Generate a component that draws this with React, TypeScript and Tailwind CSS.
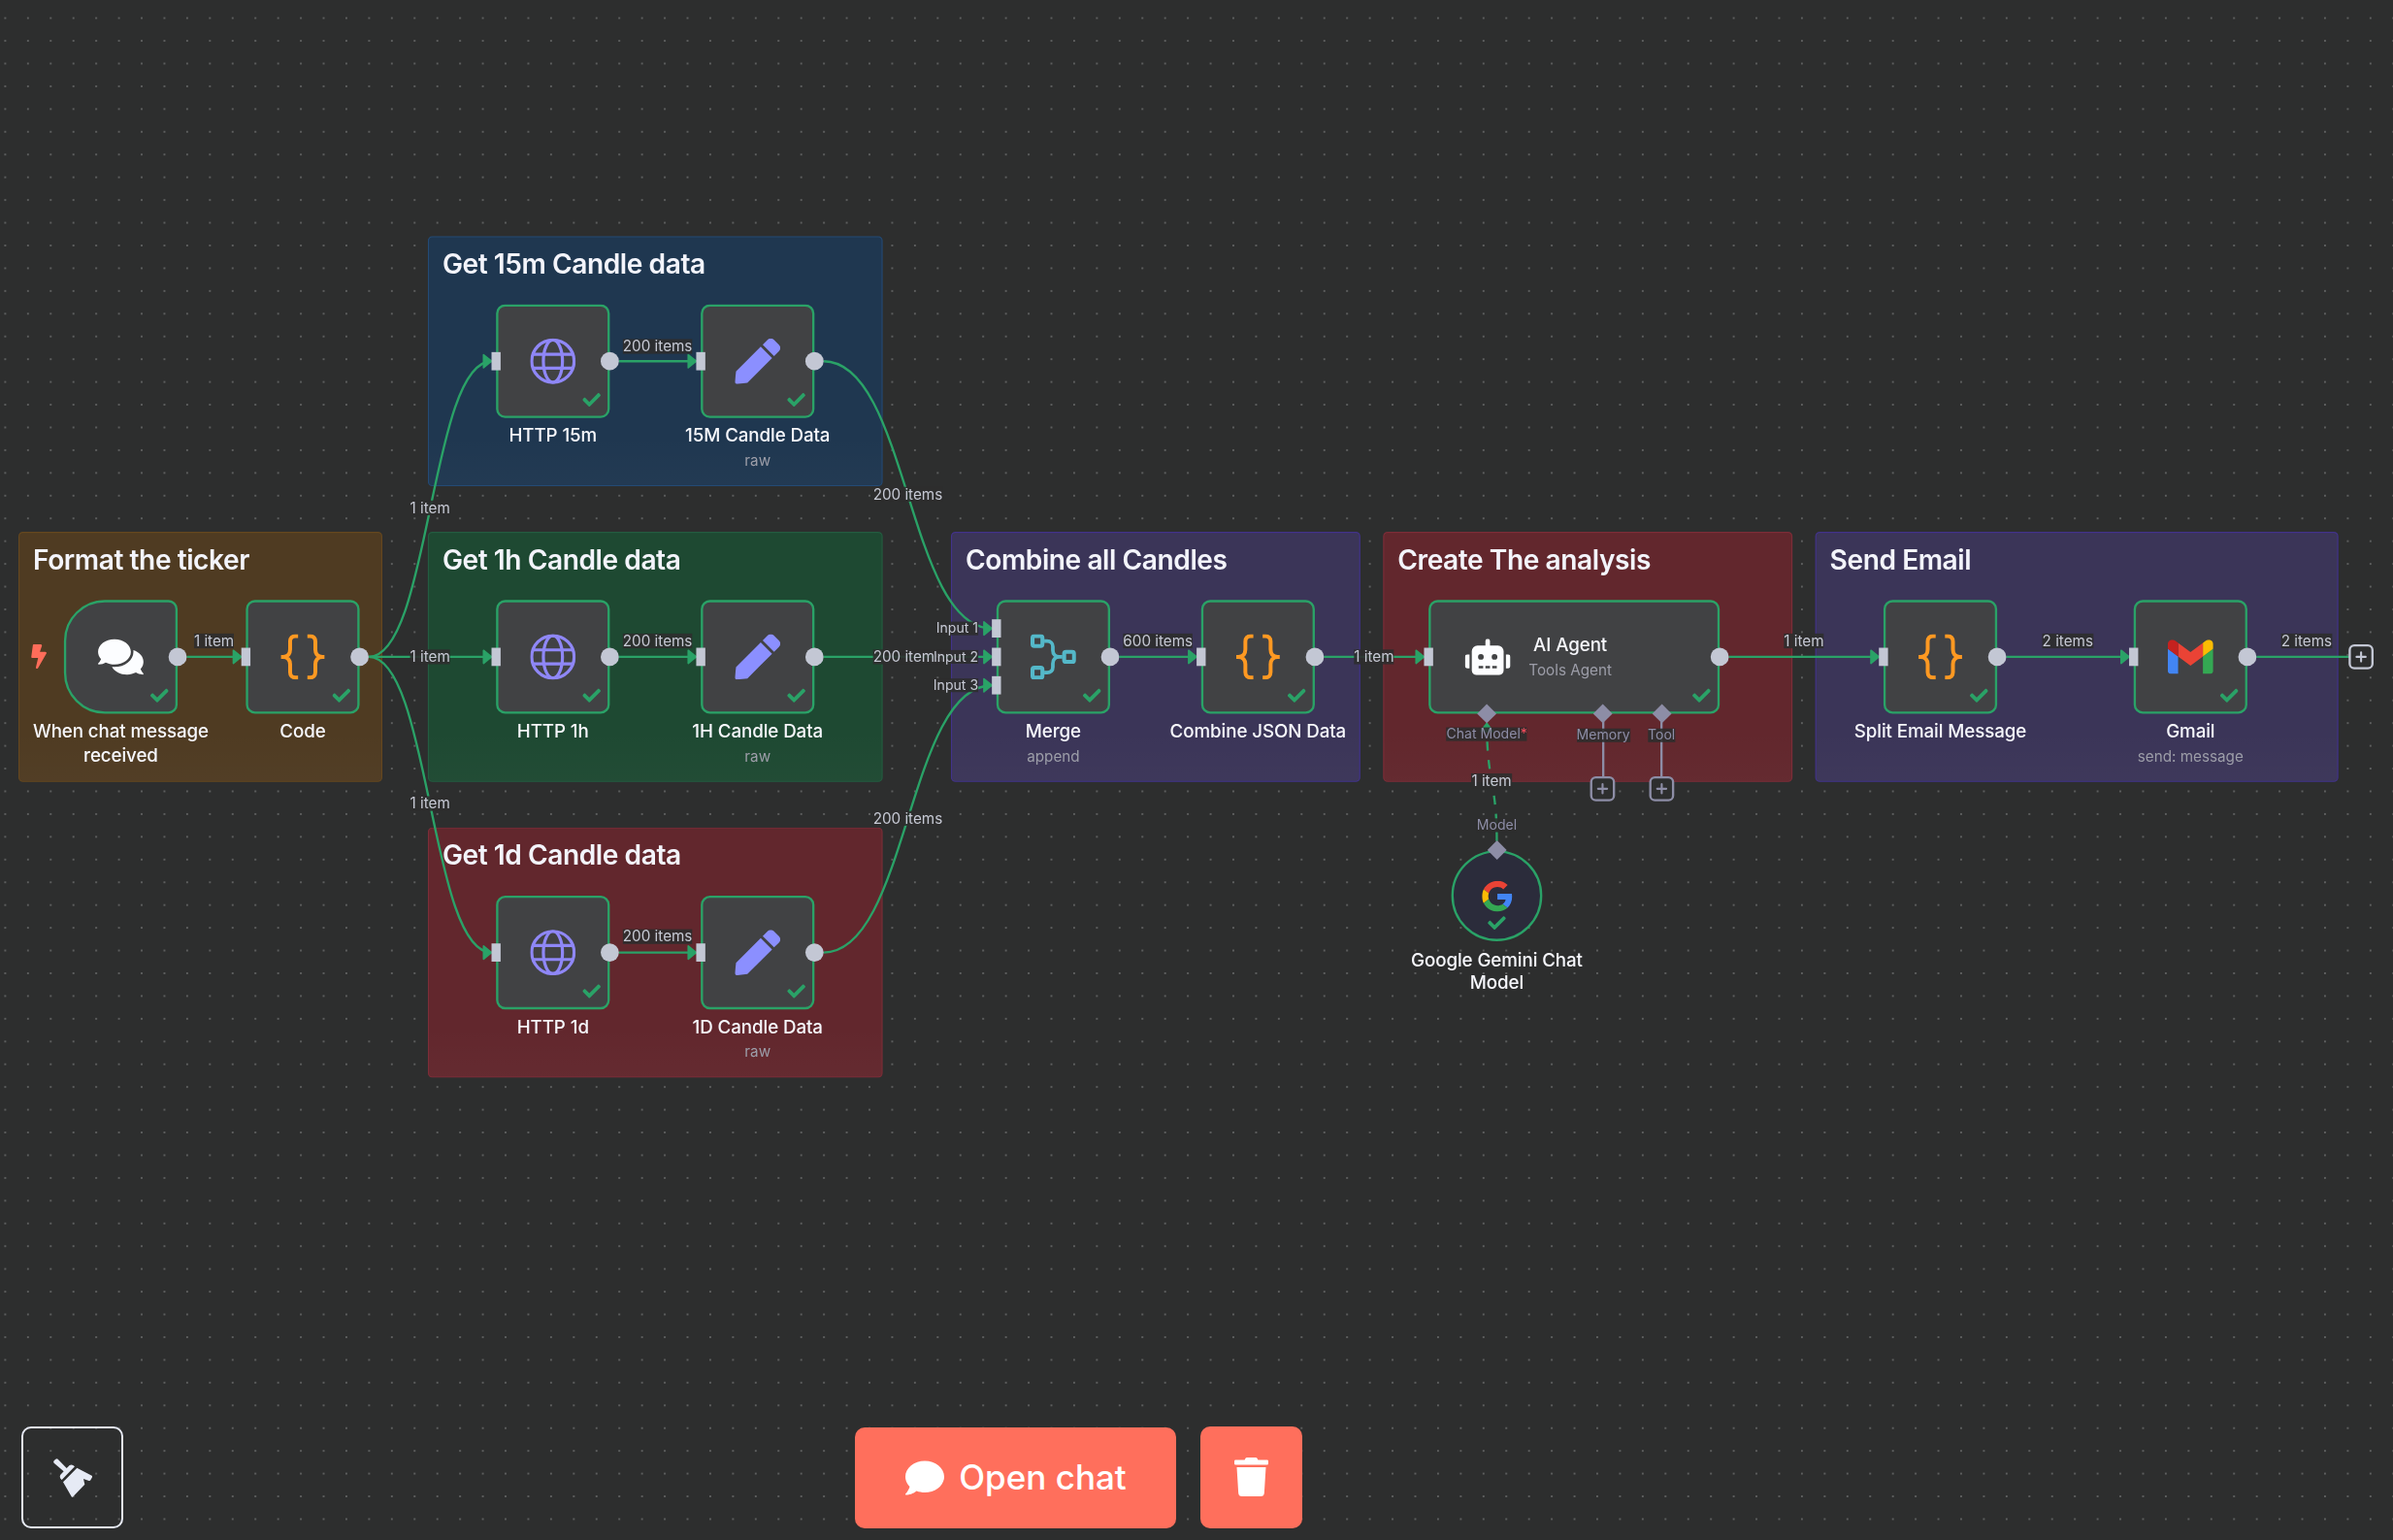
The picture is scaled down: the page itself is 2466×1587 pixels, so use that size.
import type { ReactNode } from "react";
import { FaBolt, FaCheck, FaComment, FaComments, FaPen, FaRobot, FaTrash } from "react-icons/fa";

const GREEN = "#2aa267";
const PORT = "#c3c7d4";
const AUX = "#8d8da6";

/* ---------- icons ---------- */

function BracesIcon() {
  return (
    <svg viewBox="0 0 40 40" className="size-10" fill="none" stroke="#ff9922" strokeWidth="3.4" strokeLinejoin="round">
      <path d="M15.9 1.7h-2.4c-2.8 0-4.6 1.9-4.6 4.7v7.1c0 3.9-2 6.5-6.2 6.5H.9M2.6 20c4.2 0 6.3 2.6 6.3 6.5v7.1c0 2.8 1.8 4.7 4.6 4.7h2.4" />
      <path d="M24.1 1.7h2.4c2.8 0 4.6 1.9 4.6 4.7v7.1c0 3.9 2 6.5 6.2 6.5h1.8M37.4 20c-4.2 0-6.3 2.6-6.3 6.5v7.1c0 2.8-1.8 4.7-4.6 4.7h-2.4" />
    </svg>
  );
}

function GlobeIcon() {
  return (
    <svg viewBox="0 0 40 40" className="size-10" fill="none" stroke="#8f87f7" strokeWidth="2.75">
      <circle cx="20" cy="20" r="18.65" />
      <ellipse cx="20" cy="20" rx="8.4" ry="18.65" />
      <path d="M2.5 13.9h35M2.5 26.1h35" />
    </svg>
  );
}

function MergeIcon() {
  return (
    <svg viewBox="0 0 40 40" className="size-10" fill="none" stroke="#54b8c9" strokeWidth="3.5">
      <rect x="1.75" y="1.75" width="8.7" height="8.7" rx="1.6" />
      <rect x="1.75" y="29.55" width="8.7" height="8.7" rx="1.6" />
      <rect x="29.55" y="15.65" width="8.7" height="8.7" rx="1.6" />
      <path strokeWidth="3.2" d="M12 6.2h2.6c3 0 5 1.9 5 4.8v3c0 3.6 2.2 6 5.8 6H28M12 33.8h2.6c3 0 5-1.9 5-4.8v-3c0-3.6 2.2-6 5.8-6" />
    </svg>
  );
}

function GmailIcon() {
  return (
    <svg viewBox="52 42 88 66" className="h-[30px] w-10">
      <path fill="#4285f4" d="M58 108h14V74L52 59v43c0 3.32 2.69 6 6 6" />
      <path fill="#34a853" d="M120 108h14c3.32 0 6-2.69 6-6V59l-20 15" />
      <path fill="#fbbc04" d="M120 48v26l20-15v-8c0-7.42-8.47-11.65-14.4-7.2" />
      <path fill="#ea4335" d="M72 74V48l24 18 24-18v26L96 92" />
      <path fill="#c5221f" d="M52 51v8l20 15V48l-5.6-4.2c-5.94-4.45-14.4-.22-14.4 7.2" />
    </svg>
  );
}

function GoogleIcon() {
  return (
    <svg viewBox="0 0 48 48" className="size-[27px]">
      <path fill="#ea4335" d="M24 9.5c3.54 0 6.71 1.22 9.21 3.6l6.85-6.85C35.9 2.38 30.47 0 24 0 14.62 0 6.51 5.38 2.56 13.22l7.98 6.19C12.43 13.72 17.74 9.5 24 9.5z" />
      <path fill="#4285f4" d="M46.98 24.55c0-1.57-.15-3.09-.38-4.55H24v9.02h12.94c-.58 2.96-2.26 5.48-4.78 7.18l7.73 6c4.51-4.18 7.09-10.36 7.09-17.65z" />
      <path fill="#fbbc05" d="M10.53 28.59c-.48-1.45-.76-2.99-.76-4.59s.27-3.14.76-4.59l-7.98-6.19C.92 16.46 0 20.12 0 24c0 3.88.92 7.54 2.56 10.78l7.97-6.19z" />
      <path fill="#34a853" d="M24 48c6.48 0 11.93-2.13 15.89-5.81l-7.73-6c-2.15 1.45-4.92 2.3-8.16 2.3-6.26 0-11.57-4.22-13.47-9.91l-7.98 6.19C6.51 42.62 14.62 48 24 48z" />
    </svg>
  );
}

function BroomIcon() {
  return (
    <svg viewBox="0 0 120 120" className="size-10" fill="#e6eaf5">
      <path d="M2 7 7 2q4-3 7 0l27 28 9-9q8-5 16 4L26 66q-9-7-4-16l10-10L2 14q-3-3 0-7z" />
      <path d="M73 29l46 24q3 2 1 5l-5 9q-2 3-5 2l-17-6 4 17-36 38q-3 3-5 0L30 73z" />
    </svg>
  );
}

/* ---------- canvas pieces ---------- */

const GROUPS: { x: number; y: number; w: number; title: string; tone: string }[] = [
  { x: 0, y: 0, w: 320, title: "Format the ticker", tone: "bg-[#4f3b22] border-[#65471f]" },
  { x: 360, y: -260, w: 400, title: "Get 15m Candle data", tone: "bg-[#1f3750] border-[#244a75]" },
  { x: 360, y: 0, w: 400, title: "Get 1h Candle data", tone: "bg-[#1e4932] border-[#245c41]" },
  { x: 360, y: 260, w: 400, title: "Get 1d Candle data", tone: "bg-[#62272d] border-[#7c2d38]" },
  { x: 820, y: 0, w: 360, title: "Combine all Candles", tone: "bg-[#3b3558] border-[#42338a]" },
  { x: 1200, y: 0, w: 360, title: "Create The analysis", tone: "bg-[#62272d] border-[#7c2d38]" },
  { x: 1580, y: 0, w: 460, title: "Send Email", tone: "bg-[#3b3558] border-[#42338a]" },
];

function Group({ x, y, w, title, tone }: (typeof GROUPS)[number]) {
  return (
    <div
      className={`absolute h-[220px] rounded-[4px] border bg-linear-to-b from-transparent from-80% to-white/[0.018] px-[11.8px] pt-[9.3px] ${tone}`}
      style={{ left: x, top: y, width: w }}
    >
      <h2 className="text-2xl leading-[30px] font-semibold tracking-[-0.38px] whitespace-nowrap text-[#f3f4fb]">{title}</h2>
    </div>
  );
}

function Check({ className }: { className: string }) {
  return <FaCheck className={`absolute size-4 text-[#2aa267] ${className}`} />;
}

function InPort({ y = 50 }: { y?: number }) {
  return <span className="absolute -left-1 h-4 w-2 bg-[#c3c7d4]" style={{ top: y - 8 }} />;
}

function OutPort() {
  return <span className="absolute top-[42px] -right-2 size-4 rounded-full bg-[#c3c7d4]" />;
}

type NodeProps = {
  x: number;
  y: number;
  label: string;
  sub?: string;
  icon: ReactNode;
  trigger?: boolean;
  inputs?: number[];
};

function Node({ x, y, label, sub, icon, trigger, inputs = [50] }: NodeProps) {
  return (
    <div className="absolute flex w-[100px] flex-col items-center" style={{ left: x, top: y }}>
      <div className="relative size-[100px]">
        <div
          className={`flex size-[100px] items-center justify-center border-2 border-[#2aa267] bg-[#414244] ${
            trigger ? "rounded-l-[36px] rounded-r-[8px]" : "rounded-[8px]"
          }`}
        >
          {icon}
        </div>
        {!trigger && inputs.map((p) => <InPort key={p} y={p} />)}
        <OutPort />
        <Check className="right-2 bottom-2" />
      </div>
      <div className="mt-[5.4px] w-[172px] text-center text-base leading-[20.3px] font-medium tracking-[-0.08px] text-[#f6f7fc]">{label}</div>
      {sub && <div className="mt-[3.8px] text-[13px] leading-4 whitespace-nowrap text-[#9c9da8]">{sub}</div>}
    </div>
  );
}

const NODES: NodeProps[] = [
  { x: 40, y: 60, label: "When chat message received", trigger: true, icon: <FaComments className="h-9 w-10 text-[#fcfdff]" /> },
  { x: 200, y: 60, label: "Code", icon: <BracesIcon /> },
  { x: 420, y: -200, label: "HTTP 15m", icon: <GlobeIcon /> },
  { x: 600, y: -200, label: "15M Candle Data", sub: "raw", icon: <FaPen className="size-10 text-[#8b8fff]" /> },
  { x: 420, y: 60, label: "HTTP 1h", icon: <GlobeIcon /> },
  { x: 600, y: 60, label: "1H Candle Data", sub: "raw", icon: <FaPen className="size-10 text-[#8b8fff]" /> },
  { x: 420, y: 320, label: "HTTP 1d", icon: <GlobeIcon /> },
  { x: 600, y: 320, label: "1D Candle Data", sub: "raw", icon: <FaPen className="size-10 text-[#8b8fff]" /> },
  { x: 860, y: 60, label: "Merge", sub: "append", inputs: [25, 50, 75], icon: <MergeIcon /> },
  { x: 1040, y: 60, label: "Combine JSON Data", icon: <BracesIcon /> },
  { x: 1640, y: 60, label: "Split Email Message", icon: <BracesIcon /> },
  { x: 1860, y: 60, label: "Gmail", sub: "send: message", icon: <GmailIcon /> },
];

/* x1, y1, x2, y2 */
const EDGES: [number, number, number, number][] = [
  [148, 110, 196, 110],
  [308, 110, 416, -150],
  [308, 110, 416, 110],
  [308, 110, 416, 370],
  [528, -150, 596, -150],
  [528, 110, 596, 110],
  [528, 370, 596, 370],
  [708, -150, 856, 85],
  [708, 110, 856, 110],
  [708, 370, 856, 135],
  [968, 110, 1036, 110],
  [1148, 110, 1236, 110],
  [1504, 110, 1636, 110],
  [1748, 110, 1856, 110],
];

function Edges() {
  return (
    <svg className="absolute top-0 left-0 overflow-visible" width="2100" height="220" fill="none" strokeWidth="2">
      {EDGES.map(([x1, y1, x2, y2]) => {
        const mid = (x1 + x2) / 2;
        return (
          <g key={`${x1},${y1},${x2},${y2}`} stroke={GREEN}>
            <path d={`M${x1} ${y1}C${mid} ${y1} ${mid} ${y2} ${x2} ${y2}`} />
            <path
              d={`M${x2 - 7} ${y2 - 5.7}L${x2} ${y2}L${x2 - 7} ${y2 + 5.7}Z`}
              fill={GREEN}
              strokeWidth="1.4"
              strokeLinejoin="round"
            />
          </g>
        );
      })}
      <path d="M1968 110H2050" stroke={GREEN} />
      <path d="M1300 272C1300 220 1291.2 220 1291.2 168" stroke={GREEN} strokeDasharray="8 8" />
      <path d="M1285.6 175.5L1291.2 168.5L1296.8 175.5Z" fill={GREEN} stroke={GREEN} strokeWidth="1.4" strokeLinejoin="round" />
      <path d="M1393.6 166V216M1444.8 166V216" stroke={AUX} />
    </svg>
  );
}

const LABELS: [number, number, string][] = [
  [172, 96.2, "1 item"],
  [362, -20.7, "1 item"],
  [362, 110, "1 item"],
  [362, 239.3, "1 item"],
  [562, -163.5, "200 items"],
  [562, 96.2, "200 items"],
  [562, 355.9, "200 items"],
  [782, -33.2, "200 items"],
  [782, 110, "200 items"],
  [782, 251.9, "200 items"],
  [1002, 96.2, "600 items"],
  [1192, 110, "1 item"],
  [1570, 96.2, "1 item"],
  [1802, 96.2, "2 items"],
  [2012, 96.2, "2 items"],
  [1295.4, 219.4, "1 item"],
];

function EdgeLabel({ x, y, text }: { x: number; y: number; text: string }) {
  return (
    <span
      className="absolute -translate-x-1/2 -translate-y-1/2 bg-[#2d2e2e]/90 text-[13px] leading-[13px] whitespace-nowrap text-[#c6c9d4]"
      style={{ left: x, top: y }}
    >
      {text}
    </span>
  );
}

function AuxLabel({ x, y, children }: { x: number; y: number; children: ReactNode }) {
  return (
    <span
      className="absolute -translate-x-1/2 -translate-y-1/2 bg-[#2d2e2e]/90 text-xs leading-3 whitespace-nowrap text-[#8d8da6]"
      style={{ left: x, top: y }}
    >
      {children}
    </span>
  );
}

function Diamond({ x, y }: { x: number; y: number }) {
  return <span className="absolute -mt-[6.2px] -ml-[6.2px] size-[12.4px] rotate-45 bg-[#8d8da6]" style={{ left: x, top: y }} />;
}

function PlusBox({ x, y, color }: { x: number; y: number; color: string }) {
  return (
    <svg viewBox="0 0 24 24" className="absolute -mt-3 -ml-3 size-6" style={{ left: x, top: y }} fill="#2d2e2e" stroke={color} strokeWidth="2">
      <rect x="2" y="2" width="20" height="20" rx="4" strokeWidth="2" />
      <path d="M12 8v8M8 12h8" strokeLinecap="round" strokeWidth="1.8" />
    </svg>
  );
}

function AgentNode() {
  return (
    <div className="absolute top-[60px] left-[1240px] h-[100px] w-64">
      <div className="flex h-full items-center rounded-[8px] border-2 border-[#2aa267] bg-[#414244] pl-[30px]">
        <FaRobot className="h-8 w-10 text-[#fcfdff]" />
        <div className="ml-4 flex flex-col items-center">
          <span className="text-base leading-[21px] font-medium tracking-[-0.08px] text-[#f6f7fc]">AI Agent</span>
          <span className="mt-px text-[13px] leading-5 text-[#9c9da8]">Tools Agent</span>
        </div>
      </div>
      <InPort />
      <OutPort />
      <Check className="right-2 bottom-2" />
    </div>
  );
}

function GeminiNode() {
  return (
    <div className="absolute top-[280px] left-[1260px] flex w-20 flex-col items-center">
      <div className="relative flex size-20 items-center justify-center rounded-full border-2 border-[#2aa267] bg-[#2b2c3b]">
        <GoogleIcon />
        <Check className="bottom-[6px] left-[30px]" />
      </div>
      <div className="mt-[5.6px] w-[170px] text-center text-base leading-5 font-medium tracking-[-0.08px] text-[#f6f7fc]">
        Google Gemini Chat Model
      </div>
    </div>
  );
}

export default function App() {
  return (
    <div className="relative flex h-screen w-full flex-col justify-end overflow-hidden bg-[#2d2e2e] font-[Inter,sans-serif]">
      <svg className="absolute inset-0 size-full">
        <pattern id="dots" x="-6.3" y="6.9" width="23.437" height="23.437" patternUnits="userSpaceOnUse">
          <circle cx="11.7" cy="11.7" r="0.75" fill="#9b9c9c" />
        </pattern>
        <rect width="100%" height="100%" fill="url(#dots)" />
      </svg>

      <div className="absolute top-[547.5px] left-[19.3px] h-[220px] w-[2080px] origin-top-left scale-[1.1719]">
        {GROUPS.map((g) => (
          <Group key={`${g.x},${g.y}`} {...g} />
        ))}
        <Edges />
        {LABELS.map(([x, y, text]) => (
          <EdgeLabel key={`${x},${y}`} x={x} y={y} text={text} />
        ))}
        <FaBolt className="absolute top-[99.3px] left-[6.5px] h-[21.4px] w-[22px] text-[#ff6d5a]" />
        {NODES.map((n) => (
          <Node key={`${n.x},${n.y}`} {...n} />
        ))}
        {[85, 110, 135].map((y, i) => (
          <span
            key={y}
            className="absolute right-[1236px] -translate-y-1/2 bg-[#2d2e2e]/90 text-xs leading-3 whitespace-nowrap text-[#c6c9d4]"
            style={{ top: y + 0.2 }}
          >
            Input {i + 1}
          </span>
        ))}
        <AgentNode />
        <Diamond x={1291.2} y={160} />
        <Diamond x={1393.6} y={160} />
        <Diamond x={1444.8} y={160} />
        <AuxLabel x={1291.2} y={178}>
          Chat Model<span className="text-[#ff4d5e]">*</span>
        </AuxLabel>
        <AuxLabel x={1393.6} y={178.8}>Memory</AuxLabel>
        <AuxLabel x={1444.8} y={178.8}>Tool</AuxLabel>
        <PlusBox x={1393.4} y={226.3} color={AUX} />
        <PlusBox x={1444.6} y={226.3} color={AUX} />
        <PlusBox x={2060} y={110} color={PORT} />
        <AuxLabel x={1300} y={258}>Model</AuxLabel>
        <GeminiNode />
        <Diamond x={1300} y={280} />
      </div>

      <div className="relative flex items-end pb-3 pl-[22px]">
        <button className="flex size-[105px] items-center justify-center rounded-[10px] border-2 border-[#e6eaf5]">
          <BroomIcon />
        </button>
        <button className="ml-[754px] flex h-[104.5px] w-[331px] items-center justify-center gap-[15px] rounded-[10px] bg-[#ff6f5c] pl-px text-[35px] leading-none font-medium text-white">
          <FaComment className="size-10" />
          Open chat
        </button>
        <button className="ml-[25px] flex h-[105.5px] w-[105px] items-center justify-center rounded-[10px] bg-[#ff6f5c]">
          <FaTrash className="h-10 w-[35px] text-white" />
        </button>
      </div>
    </div>
  );
}
